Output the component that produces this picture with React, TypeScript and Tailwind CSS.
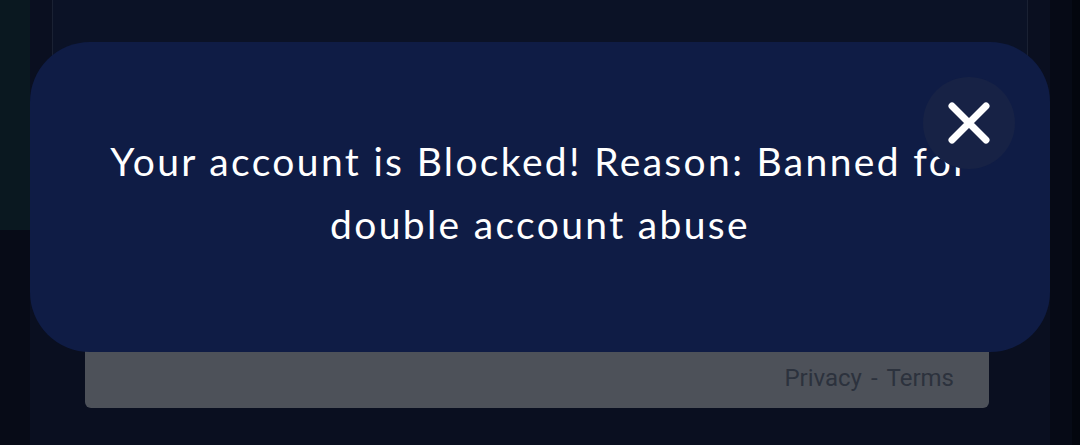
import React from "react";

export default function App() {
  return (
    <div className="relative w-[1080px] h-[445px] overflow-hidden bg-[#090e1e] flex" style={{ fontFamily: "Lato, sans-serif" }}>
      {/* left strip */}
      <div className="w-[30px] flex flex-col shrink-0">
        <div className="h-[230px] bg-[#0a1820]" />
        <div className="flex-1 bg-[#070b17]" />
      </div>
      {/* main area */}
      <div className="flex-1 bg-[#0a0f20] px-[22px] flex flex-col">
        <div className="shrink-0 h-[350px] -mt-[20px] rounded-[18px] border border-[#1a2133] bg-[#0b1226]" />
        <div className="mt-[8px] ml-[33px] mr-[39px] h-[70px] rounded-b-[6px] bg-[#4d5159] flex items-end justify-end pr-[35px] pb-[18px]">
          <span className="text-[24px] text-[#2c323d] leading-none" style={{ fontFamily: "Roboto, sans-serif" }}>
            Privacy<span className="mx-[9px]">-</span>Terms
          </span>
        </div>
      </div>
      {/* right strip */}
      <div className="w-[30px] shrink-0 flex">
        <div className="flex-1 bg-[#060a16]" />
        <div className="w-[8px] bg-[#03060e]" />
      </div>

      {/* modal */}
      <div className="absolute left-[30px] top-[42px] w-[1020px] h-[310px] rounded-[60px] bg-[#0f1c45] flex items-center justify-center">
        <p className="w-[920px] text-center text-white text-[39px] leading-[63px] tracking-[2.35px] -mt-[8px]">
          Your account is Blocked! Reason: Banned for double account abuse
        </p>
        <button className="absolute left-[893px] top-[35px] w-[92px] h-[92px] rounded-full bg-[#172245] flex items-center justify-center">
          <svg width="42" height="42" viewBox="0 0 42 42" fill="none">
            <path d="M4 4L38 38M38 4L4 38" stroke="white" strokeWidth="7" strokeLinecap="round" />
          </svg>
        </button>
      </div>
    </div>
  );
}
